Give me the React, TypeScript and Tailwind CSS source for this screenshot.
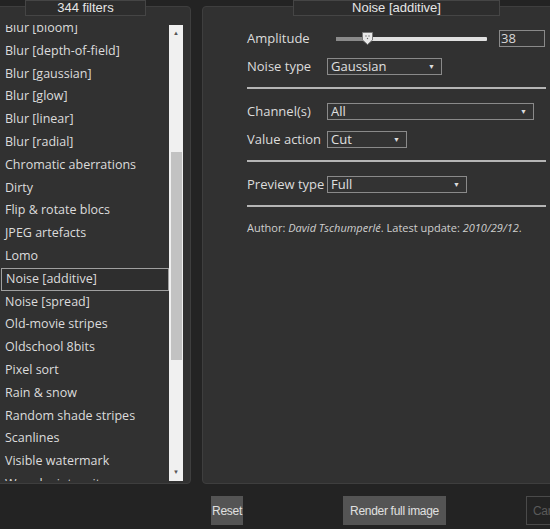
import React from "react";

const filters = [
  "Blur [bloom]",
  "Blur [depth-of-field]",
  "Blur [gaussian]",
  "Blur [glow]",
  "Blur [linear]",
  "Blur [radial]",
  "Chromatic aberrations",
  "Dirty",
  "Flip & rotate blocs",
  "JPEG artefacts",
  "Lomo",
  "Noise [additive]",
  "Noise [spread]",
  "Old-movie stripes",
  "Oldschool 8bits",
  "Pixel sort",
  "Rain & snow",
  "Random shade stripes",
  "Scanlines",
  "Visible watermark",
  "Warp by intensity",
];

function Select({ value, width }: { value: string; width: string }) {
  return (
    <div
      className={`${width} h-[17px] flex items-center justify-between border border-[#8a8a8a] bg-[#333] pl-[3px] pr-[6px] text-[13px] leading-none text-[#e0e0e0]`}
    >
      <span>{value}</span>
      <span className="text-[7px] text-[#ddd]">▼</span>
    </div>
  );
}

function Row({ label, children }: { label: string; children: React.ReactNode }) {
  return (
    <div className="flex items-center h-[17px]">
      <span className="w-[80px] shrink-0 text-[13px] text-[#dcdcdc]">{label}</span>
      {children}
    </div>
  );
}

export default function App() {
  return (
    <div
      className="w-[550px] h-[529px] bg-[#232323] overflow-hidden flex flex-col"
      style={{ fontFamily: '"Open Sans", "Noto Sans", sans-serif' }}
    >
      <div className="flex gap-[11px] mt-[6px] h-[478px]">
        {/* Filter list */}
        <div className="relative -ml-[4px] w-[195px] shrink-0 rounded-[4px] border border-[#3e3e3e] bg-[#313131]">
          <div
            className="absolute left-[28px] -top-[7px] w-[121px] h-[16px] border border-[#454545] bg-[#2d2d2d] flex items-center justify-center text-[13px] text-[#e6e6e6]"
            style={{ fontFamily: '"Liberation Sans", Arial, sans-serif' }}
          >
            344 filters
          </div>
          <div className="flex mt-[18px] h-[456px]">
            <div className="w-[172px] overflow-hidden">
              <div className="-mt-[8px] ml-[4px]">
                {filters.map((f) => (
                  <div
                    key={f}
                    className={`h-[22.8px] flex items-center pl-[4px] text-[12.5px] text-[#dcdcdc] ${
                      f === "Noise [additive]" ? "border border-[#a0a0a0] pl-[3px] bg-[#2e2e2e]" : ""
                    }`}
                  >
                    {f}
                  </div>
                ))}
              </div>
            </div>
            <div className="w-[14px] bg-[#f0f0f0] flex flex-col items-center">
              <span className="text-[6px] text-[#555] mt-[4px] h-[10px]">▲</span>
              <div className="w-[11px] h-[208px] bg-[#c2c2c2] mt-[113px]" />
              <div className="flex-1" />
              <span className="text-[6px] text-[#555] mb-[4px]">▼</span>
            </div>
          </div>
        </div>

        {/* Filter settings */}
        <div className="relative w-[360px] shrink-0 rounded-[4px] border border-[#3e3e3e] bg-[#313131]">
          <div
            className="absolute left-[90px] -top-[7px] w-[207px] h-[16px] border border-[#454545] bg-[#2d2d2d] flex items-center justify-center text-[13px] text-[#e6e6e6]"
            style={{ fontFamily: '"Liberation Sans", Arial, sans-serif' }}
          >
            Noise [additive]
          </div>
          <div className="ml-[44px] mt-[23px] w-[299px] flex flex-col">
            <Row label="Amplitude">
              <div className="relative ml-[9px] w-[151px] h-[4px] bg-[#e0e0e0] rounded-[1px]">
                <div className="absolute left-0 top-0 h-[4px] w-[30px] bg-[#8a8a8a]" />
                <svg className="absolute left-[26px] -top-[5px]" width="11" height="13" viewBox="0 0 11 13">
                  <path d="M0.5 0.5 H10.5 V8 L5.5 12.5 L0.5 8 Z" fill="#e8e8e8" stroke="#777" />
                  <circle cx="4" cy="4" r="0.7" fill="#666" />
                  <circle cx="7" cy="4" r="0.7" fill="#666" />
                  <circle cx="5.5" cy="6.5" r="0.7" fill="#666" />
                </svg>
              </div>
              <div className="ml-[12px] w-[46px] h-[17px] border border-[#8a8a8a] bg-[#333] flex items-center pl-[1px] text-[13px] text-[#d8d8d8]">
                38
              </div>
            </Row>
            <div className="mt-[11px]">
              <Row label="Noise type">
                <Select value="Gaussian" width="w-[115px]" />
              </Row>
            </div>
            <div className="mt-[12px] border-t-2 border-[#b5b5b5]" />
            <div className="mt-[14px]">
              <Row label="Channel(s)">
                <Select value="All" width="w-[207px]" />
              </Row>
            </div>
            <div className="mt-[11px]">
              <Row label="Value action">
                <Select value="Cut" width="w-[80px]" />
              </Row>
            </div>
            <div className="mt-[12px] border-t-2 border-[#b5b5b5]" />
            <div className="mt-[14px]">
              <Row label="Preview type">
                <Select value="Full" width="w-[140px]" />
              </Row>
            </div>
            <div className="mt-[12px] border-t-2 border-[#b5b5b5]" />
            <p className="mt-[13px] text-[11px] text-[#cfcfcf] whitespace-nowrap">
              Author: <i>David Tschumperlé</i>. Latest update: <i>2010/29/12</i>.
            </p>
          </div>
        </div>
      </div>

      {/* Buttons */}
      <div
        className="flex items-start mt-[12px] text-[12px] tracking-tight whitespace-nowrap"
        style={{ fontFamily: '"Liberation Sans", Arial, sans-serif' }}
      >
        <div className="shrink-0 ml-[211px] w-[32px] h-[29px] bg-[#545454] flex items-center justify-center text-[#e0e0e0]">
          Reset
        </div>
        <div className="shrink-0 ml-[100px] w-[103px] h-[29px] bg-[#545454] flex items-center justify-center text-[#e0e0e0]">
          Render full image
        </div>
        <div className="shrink-0 ml-[80px] w-[60px] h-[29px] border border-[#4a4a4a] flex items-center pl-[6px] text-[#5a5a5a]">
          Cancel
        </div>
      </div>
    </div>
  );
}
